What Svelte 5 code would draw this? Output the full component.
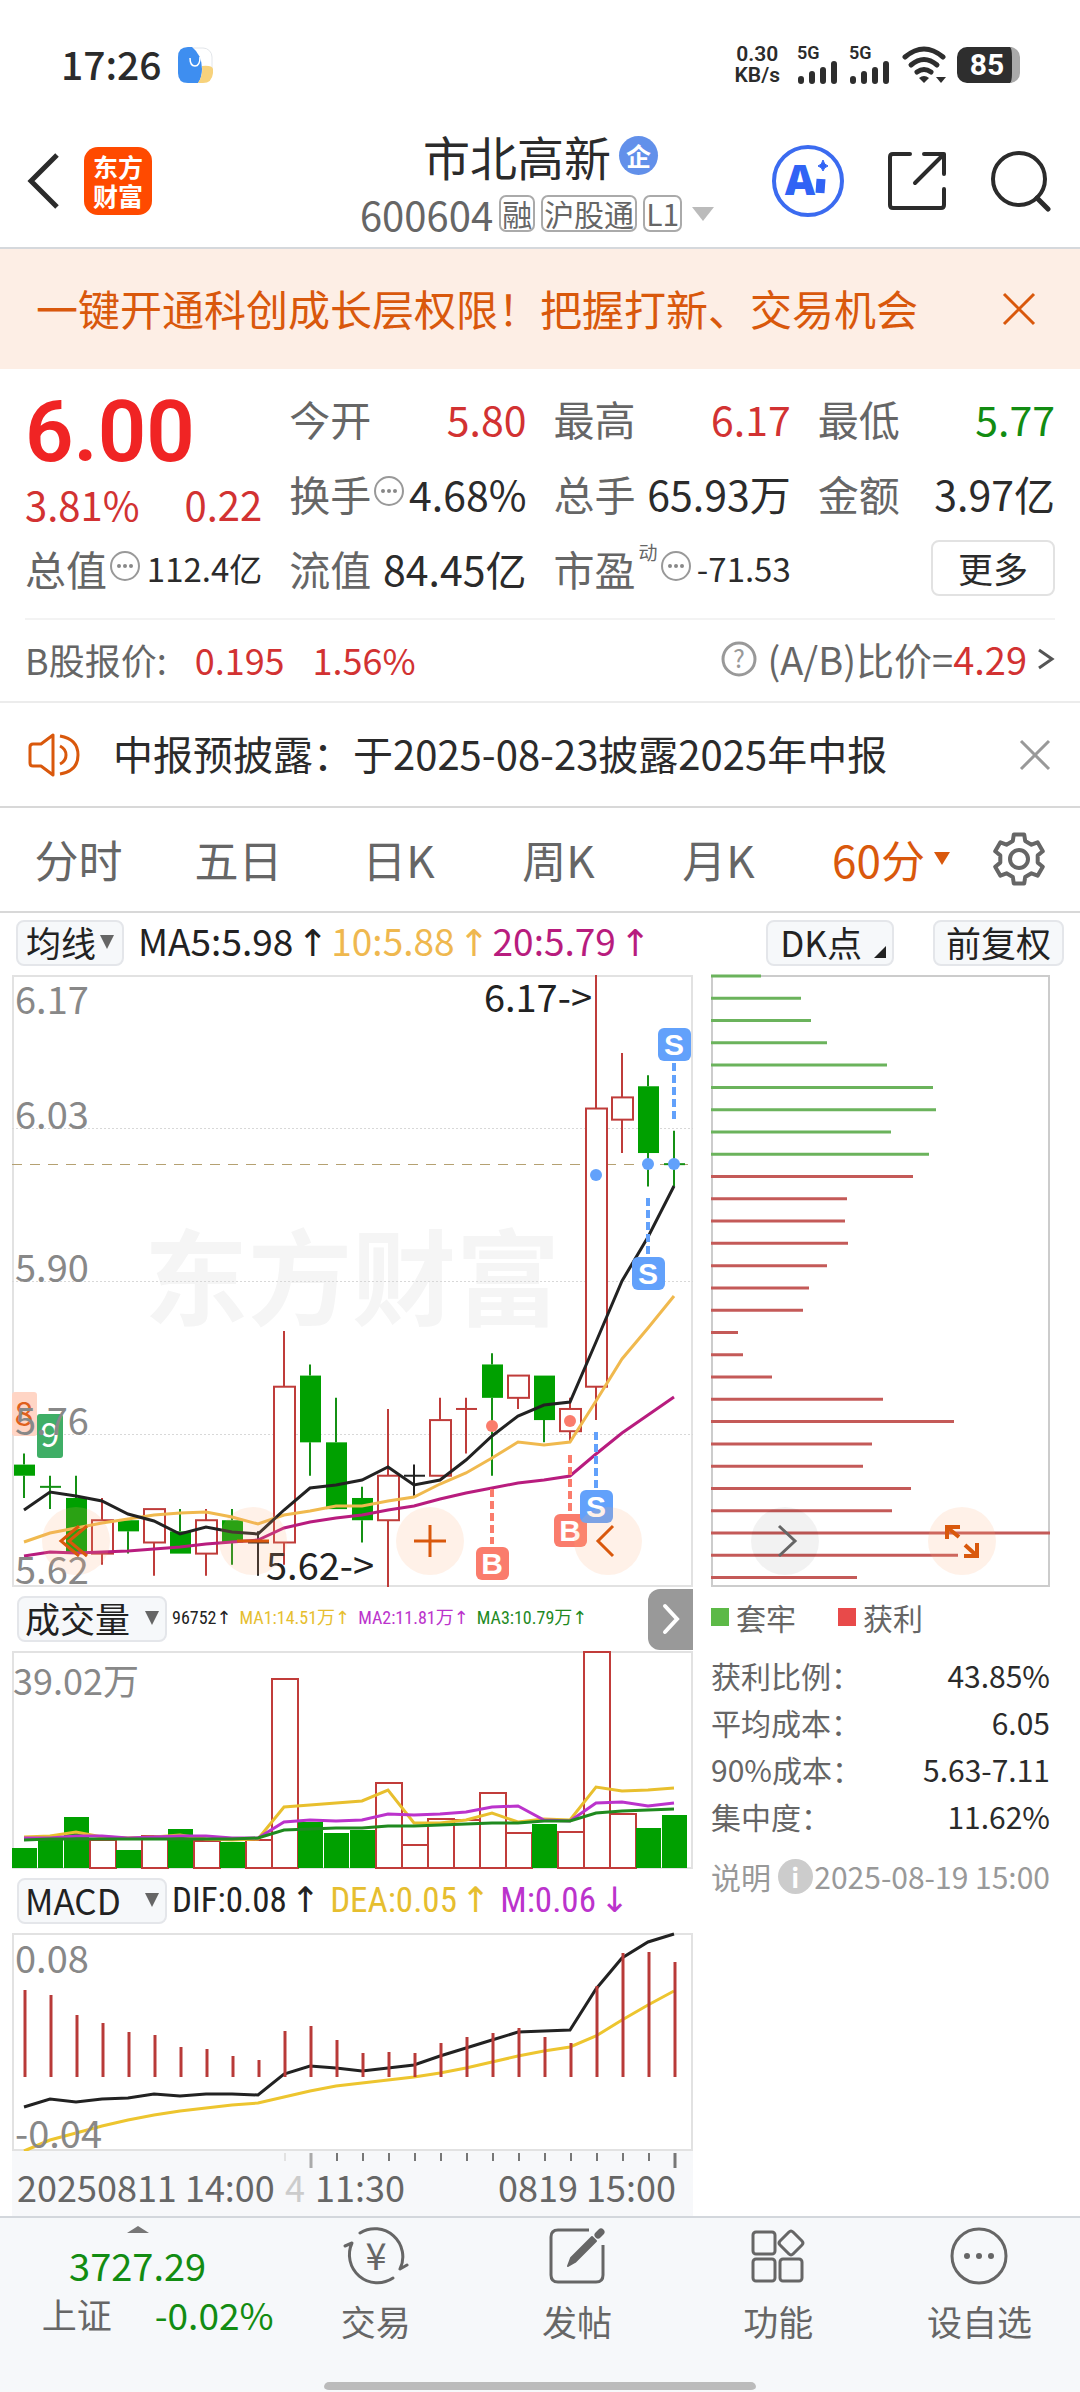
<script lang="ts">
    const STEP = 26;
    const TOP_PRICE = 6.17;
    const PX_PER_YUAN = 612 / 0.55;

    // [open, close, high, low]
    const candles = [
        [5.73, 5.72, 5.74, 5.7],
        [5.71, 5.71, 5.72, 5.69],
        [5.7, 5.65, 5.72, 5.65],
        [5.65, 5.68, 5.7, 5.64],
        [5.68, 5.67, 5.68, 5.65],
        [5.66, 5.69, 5.69, 5.63],
        [5.67, 5.65, 5.69, 5.65],
        [5.65, 5.68, 5.69, 5.63],
        [5.68, 5.66, 5.69, 5.64],
        [5.66, 5.66, 5.67, 5.63],
        [5.66, 5.8, 5.85, 5.64],
        [5.81, 5.75, 5.82, 5.72],
        [5.75, 5.69, 5.79, 5.69],
        [5.7, 5.68, 5.71, 5.66],
        [5.68, 5.72, 5.78, 5.62],
        [5.72, 5.72, 5.73, 5.7],
        [5.72, 5.77, 5.79, 5.72],
        [5.78, 5.78, 5.79, 5.74],
        [5.82, 5.79, 5.83, 5.72],
        [5.79, 5.81, 5.81, 5.78],
        [5.81, 5.77, 5.81, 5.75],
        [5.76, 5.78, 5.79, 5.75],
        [5.8, 6.05, 6.17, 5.77],
        [6.04, 6.06, 6.1, 6.01],
        [6.07, 6.01, 6.08, 5.98],
        [6.0, 6.0, 6.03, 5.98],
    ];
    // colour of the candles that open and close at one price
    const flatColors: Record<number, string> = { 1: "green", 9: "black", 15: "black", 17: "red", 25: "green" };

    const ma5 = [535, 517, 521, 526, 539, 546, 559, 552, 557, 559, 535, 513, 510, 505, 492, 510, 505, 485, 461, 441, 430, 427, 367, 306, 262, 211];
    const ma10 = [567, 558, 553, 548, 544, 540, 538, 537, 542, 549, 540, 536, 531, 531, 526, 522, 509, 498, 483, 467, 470, 467, 426, 384, 353, 321];
    const ma20 = [581, 577, 578, 577, 576, 574, 572, 569, 567, 565, 553, 547, 543, 540, 535, 531, 524, 518, 513, 508, 505, 501, 479, 458, 440, 422];

    const marks = [
        { kind: "S", i: 25, y: 53, from: 88, to: 144, dot: 189 },
        { kind: "S", i: 24, y: 282, from: 223, to: 279, dot: 189 },
        { kind: "B", i: 18, y: 572, from: 514, to: 569, dot: 451 },
        { kind: "B", i: 21, y: 539, from: 480, to: 536, dot: 446 },
        { kind: "S", i: 22, y: 515, from: 457, to: 513, dot: 200 },
    ];

    const volumes = [20, 29, 51, 28, 18, 32, 39, 27, 26, 28, 189, 46, 35, 38, 85, 23, 49, 48, 75, 35, 44, 36, 216, 54, 40, 53];
    const volRed = [3, 5, 7, 9, 10, 14, 15, 16, 17, 18, 19, 21, 22, 23];
    const volMa1 = [186, 185, 181, 186, 187, 186, 184, 188, 189, 188, 156, 154, 152, 150, 139, 172, 172, 169, 162, 171, 168, 169, 136, 140, 139, 137];
    const volMa2 = [187, 187, 185, 185, 187, 186, 185, 185, 187, 187, 171, 169, 170, 169, 163, 164, 163, 161, 156, 155, 169, 170, 152, 151, 155, 152];
    const volMa3 = [189, 188, 188, 188, 188, 188, 188, 188, 188, 187, 179, 178, 177, 177, 175, 175, 174, 173, 172, 172, 170, 170, 162, 160, 159, 158];

    const macd = [87, 82, 62, 54, 45, 42, 30, 28, 21, 17, 46, 51, 37, 24, 25, 24, 34, 40, 44, 49, 40, 34, 91, 124, 125, 115];
    const dif = [174, 166, 169, 166, 165, 161, 163, 161, 161, 162, 141, 133, 135, 138, 135, 132, 123, 115, 107, 99, 98, 97, 56, 25, 9, 1];
    const dea = [218, 207, 200, 193, 187, 182, 178, 175, 172, 170, 164, 158, 153, 150, 147, 144, 140, 135, 129, 123, 118, 114, 103, 87, 72, 58];

    const chips = [50, 90, 100, 116, 176, 222, 225, 180, 218, 202, 136, 134, 137, 116, 98, 92, 27, 32, 61, 172, 243, 161, 152, 200, 181, 339, 247, 146];
    const LOSS_ROWS = 9;

    const stats = [
        ["获利比例：", "43.85%"],
        ["平均成本：", "6.05"],
        ["90%成本：", "5.63-7.11"],
        ["集中度：", "11.62%"],
    ];

    const tabs = ["分时", "五日", "日K", "周K", "月K", "60分"];
    let activeTab = $state("60分");
    let bannerOpen = $state(true);
    let noticeOpen = $state(true);

    const cx = (i: number) => 12 + STEP * i;
    const py = (price: number) => (TOP_PRICE - price) * PX_PER_YUAN;
    const line = (ys: number[]) => ys.map((y, i) => `${cx(i)},${y}`).join(" ");

    function candleColor(i: number) {
        const [open, close] = candles[i];
        return flatColors[i] ?? (close > open ? "red" : "green");
    }

    function gearPath() {
        const pts: string[] = [];
        for (let k = 0; k < 6; k++) {
            const a = -90 + k * 60;
            for (const [d, r] of [[-19, 19], [-12, 25], [12, 25], [19, 19]]) {
                const t = ((a + d) * Math.PI) / 180;
                pts.push(`${(28 + r * Math.cos(t)).toFixed(1)} ${(28 + r * Math.sin(t)).toFixed(1)}`);
            }
        }
        return "M" + pts.join("L") + "Z";
    }
</script>

{#snippet dots()}
    <svg class="dots" viewBox="0 0 30 30" aria-hidden="true">
        <circle cx="15" cy="15" r="14" fill="none" stroke="#999" stroke-width="2" />
        <circle cx="9" cy="15" r="2" fill="#888" />
        <circle cx="15" cy="15" r="2" fill="#888" />
        <circle cx="21" cy="15" r="2" fill="#888" />
    </svg>
{/snippet}

{#snippet signal()}
    <span class="signal">
        <b>5G</b>
        <svg width="42" height="25" viewBox="0 0 42 25" stroke="#2e2e2e" stroke-width="6" stroke-linecap="round">
            <path d="M4 19V21M15 14V21M26 10V21M37 4V21" />
        </svg>
    </span>
{/snippet}

<div class="status">
    <span class="clock">17:26</span>
    <svg class="app-dot" width="35" height="36" viewBox="0 0 35 36">
        <rect x="1" y="1" width="33" height="34" rx="9" fill="#fff" stroke="#e3e6ea" />
        <path d="M10 0H14Q24 8 24 22Q24 31 20 36H10Q0 36 0 26V10Q0 0 10 0Z" fill="#3e8ef0" />
        <path d="M24 19Q34 18 35 22V26Q34 36 25 36H20Q25 29 24 19Z" fill="#f7d27c" />
        <path d="M12 11Q12 19 17 19Q22 19 22 10" fill="none" stroke="#fff" stroke-width="1.500" />
    </svg>
    <div class="status-right">
        <span class="speed"><b>0.30</b><b>KB/s</b></span>
        {@render signal()}
        {@render signal()}
        <svg width="46" height="38" viewBox="0 0 46 38" fill="none" stroke="#2e2e2e" stroke-width="5" stroke-linecap="round">
            <path d="M4 11Q23 -5 42 11" />
            <path d="M10 19Q23 8 36 19" />
            <path d="M16 26Q23 21 30 26" />
            <path d="M18 32Q23 28 28 32L23 37Z" fill="#2e2e2e" stroke="none" />
            <path d="M35 31H45L40 37Z" fill="#2e2e2e" stroke="none" />
        </svg>
        <span class="battery"><b>85</b></span>
    </div>
</div>

<header>
    <div class="side">
        <button aria-label="返回">
            <svg width="34" height="58" viewBox="0 0 34 58" fill="none" stroke="#2b2b2b" stroke-width="5">
                <path d="M31 3L5 29L31 55" />
            </svg>
        </button>
        <a class="logo" href="#home"><span>东方</span><span>财富</span></a>
    </div>
    <div class="title">
        <h1>市北高新<span class="corp">企</span></h1>
        <div class="code">
            600604
            <span class="tag">融</span>
            <span class="tag">沪股通</span>
            <span class="tag">L1</span>
            <i class="tri"></i>
        </div>
    </div>
    <div class="side right">
        <button aria-label="AI">
            <svg width="74" height="74" viewBox="0 0 74 74">
                <circle cx="37" cy="37" r="34" fill="#fff" stroke="#3b6bf0" stroke-width="4" />
                <text class="ai" x="29" y="51" text-anchor="middle">A</text>
                <path d="M50 35L49 49" stroke="#3063f5" stroke-width="9" />
                <path d="M52 16Q53 21 57 22Q53 23 52 27Q51 23 47 22Q51 21 52 16Z" fill="#3063f5" stroke="#3063f5" />
            </svg>
        </button>
        <button aria-label="分享">
            <svg width="60" height="60" viewBox="0 0 60 60" fill="none" stroke="#2b2b2b" stroke-width="4" stroke-linecap="round" stroke-linejoin="round">
                <path d="M23 3H6Q3 3 3 6V54Q3 57 6 57H54Q57 57 57 54V38" />
                <path d="M37 3H57V23M56 4L28 32" />
            </svg>
        </button>
        <button aria-label="搜索">
            <svg width="62" height="62" viewBox="0 0 62 62" fill="none" stroke="#2b2b2b" stroke-width="4" stroke-linecap="round">
                <circle cx="30" cy="29" r="26" />
                <path d="M48 48L59 59" stroke-width="5" />
            </svg>
        </button>
    </div>
</header>

{#if bannerOpen}
    <div class="banner">
        <a href="#open">一键开通科创成长层权限！把握打新、交易机会</a>
        <button aria-label="关闭" onclick={() => (bannerOpen = false)}>
            <svg width="34" height="34" viewBox="0 0 34 34" stroke="#d9580c" stroke-width="3"><path d="M2 2L32 32M32 2L2 32" /></svg>
        </button>
    </div>
{/if}

<section class="quote">
    <div class="price">
        <strong>6.00</strong>
        <div class="pair red"><span>3.81%</span><span>0.22</span></div>
    </div>
    <div class="pair"><span class="label">今开</span><span class="red">5.80</span></div>
    <div class="pair"><span class="label">最高</span><span class="red">6.17</span></div>
    <div class="pair"><span class="label">最低</span><span class="green">5.77</span></div>
    <div class="pair"><span class="label">换手{@render dots()}</span><span>4.68%</span></div>
    <div class="pair"><span class="label">总手</span><span>65.93万</span></div>
    <div class="pair"><span class="label">金额</span><span>3.97亿</span></div>
    <div class="pair"><span class="label">总值{@render dots()}</span><span class="small">112.4亿</span></div>
    <div class="pair"><span class="label">流值</span><span>84.45亿</span></div>
    <div class="pair"><span class="label">市盈<sup>动</sup>{@render dots()}</span><span class="small">-71.53</span></div>
    <button class="more">更多</button>
</section>

<div class="bshare">
    <span>B股报价:</span>
    <span class="red">0.195</span>
    <span class="red">1.56%</span>
    <a href="#ratio">
        <svg class="help" width="36" height="36" viewBox="0 0 36 36">
            <circle cx="18" cy="18" r="16" fill="none" stroke="#999" stroke-width="3" />
            <text class="question" x="18" y="27" text-anchor="middle">?</text>
        </svg>
        <span>(A/B)比价=<em>4.29</em></span>
        <svg width="18" height="24" viewBox="0 0 18 24" fill="none" stroke="#555" stroke-width="3"><path d="M2 3L15 12L2 21" /></svg>
    </a>
</div>

{#if noticeOpen}
    <div class="notice">
        <svg width="54" height="46" viewBox="0 0 54 46" fill="none" stroke="#d9580c" stroke-width="3">
            <path d="M25 3V43L13 34H5Q2 34 2 31V15Q2 12 5 12H13Z" stroke-linejoin="round" />
            <path d="M32 14Q38 17 38 23Q38 29 32 32M32 4Q50 7 50 23Q50 39 32 42" />
        </svg>
        <span>中报预披露：于2025-08-23披露2025年中报</span>
        <button aria-label="关闭" onclick={() => (noticeOpen = false)}>
            <svg width="32" height="32" viewBox="0 0 32 32" stroke="#999" stroke-width="3"><path d="M2 2L30 30M30 2L2 30" /></svg>
        </button>
    </div>
{/if}

<nav class="tabs">
    {#each tabs as tab}
        <button class:active={tab === activeTab} onclick={() => (activeTab = tab)}>{tab}</button>
    {/each}
    <button class="gear" aria-label="设置">
        <svg width="56" height="56" viewBox="0 0 56 56" fill="none" stroke="#666" stroke-width="4" stroke-linejoin="round">
            <path d={gearPath()} />
            <circle cx="28" cy="28" r="9" />
        </svg>
    </button>
</nav>

<div class="ma-row">
    <button class="chip">均线<i class="tri dark"></i></button>
    <div class="values ma">
        <span class="ink">MA5:5.98<i class="arrow">↑</i></span>
        <span class="amber">10:5.88<i class="arrow">↑</i></span>
        <span class="magenta">20:5.79<i class="arrow">↑</i></span>
    </div>
    <button class="chip dk">DK点<svg width="12" height="12" viewBox="0 0 12 12"><path d="M12 0V12H0Z" fill="#222" /></svg></button>
    <button class="chip fq">前复权</button>
</div>

<main>
    <div class="left">
        <svg class="chart" viewBox="0 0 681 612">
            <rect x="1" y="1" width="679" height="610" fill="#fff" stroke="#e2e2e2" stroke-width="2" />
            <text class="watermark" x="340" y="343" text-anchor="middle">东方财富</text>
            <g stroke="#d8d8d8" stroke-dasharray="2 2">
                <path d="M0 153.500H681M0 306.500H681M0 459.500H681" />
            </g>
            <path d="M0 189.500H676" stroke="#b5a172" stroke-dasharray="10 8" />
            <rect x="0" y="417" width="25" height="44" rx="3" fill="#ffd5c5" />
            <text x="12" y="451" font-size="34" text-anchor="middle" fill="#e0601c">8</text>
            <rect x="25" y="439" width="26" height="44" rx="3" fill="#3fae66" />
            <text x="38" y="472" font-size="34" text-anchor="middle" fill="#fff">9</text>
            {#each candles as [open, close, high, low], i}
                {@const color = candleColor(i)}
                {@const top = py(Math.max(open, close))}
                {@const bottom = py(Math.min(open, close))}
                <g class="candle {color}">
                    <path d="M{cx(i)} {py(high)}V{top}M{cx(i)} {bottom}V{py(low)}" />
                    {#if open === close}
                        <path d="M{cx(i) - 10} {top}H{cx(i) + 11}" />
                    {:else if color === "red"}
                        <rect x={cx(i) - 10} y={top} width="21" height={bottom - top} />
                    {:else}
                        <rect class="solid" x={cx(i) - 10} y={top} width="21" height={bottom - top} />
                    {/if}
                </g>
            {/each}
            <g fill="none" stroke-width="3">
                <polyline points={line(ma20)} stroke="#b81c7e" />
                <polyline points={line(ma10)} stroke="#f0b94e" />
                <polyline points={line(ma5)} stroke="#222" />
            </g>
            <g class="axis">
                <text x="3" y="39">6.17</text>
                <text x="3" y="154">6.03</text>
                <text x="3" y="307">5.90</text>
                <text x="3" y="460">5.76</text>
                <text x="3" y="609">5.62</text>
            </g>
            <text class="peak" x="580" y="37" text-anchor="end">6.17-&gt;</text>
            <text class="peak" x="254" y="605">5.62-&gt;</text>
            {#each marks as mark}
                <g class="mark {mark.kind}">
                    <path d="M{cx(mark.i)} {mark.from}V{mark.to}" />
                    <circle cx={cx(mark.i)} cy={mark.dot} r="6" />
                    <rect x={cx(mark.i) - 16} y={mark.y} width="33" height="33" rx="6" />
                    <text x={cx(mark.i)} y={mark.y + 27} text-anchor="middle">{mark.kind}</text>
                </g>
            {/each}
        </svg>

        <div class="sub-row">
            <button class="chip wide">成交量<i class="tri dark"></i></button>
            <div class="values tight">
                <span class="ink">96752<i class="arrow">↑</i></span>
                <span class="gold">MA1:14.51万<i class="arrow">↑</i></span>
                <span class="purple">MA2:11.81万<i class="arrow">↑</i></span>
                <span class="leaf">MA3:10.79万<i class="arrow">↑</i></span>
            </div>
            <button class="fold" aria-label="展开">
                <svg width="18" height="32" viewBox="0 0 18 32" fill="none" stroke="#fff" stroke-width="4" stroke-linecap="round"><path d="M3 3L15 16L3 29" /></svg>
            </button>
        </div>

        <svg class="chart" viewBox="0 0 681 218">
            <rect x="1" y="1" width="679" height="216" fill="#fff" stroke="#e2e2e2" stroke-width="2" />
            {#each volumes as v, i}
                {#if volRed.includes(i)}
                    <rect x={cx(i) - 12} y={217 - v} width="26" height={v} fill="#fff" stroke="#c13c3a" stroke-width="2" />
                {:else}
                    <rect x={cx(i) - 12} y={217 - v} width="25" height={v} fill="#00a000" />
                {/if}
            {/each}
            <g fill="none" stroke-width="3">
                <polyline points={line(volMa1)} stroke="#e8bf2e" />
                <polyline points={line(volMa2)} stroke="#bb33cc" />
                <polyline points={line(volMa3)} stroke="#1f8a1f" />
            </g>
            <text class="axis volume" x="1" y="44">39.02万</text>
        </svg>

        <div class="sub-row">
            <button class="chip wide">MACD<i class="tri dark"></i></button>
            <div class="values">
                <span class="ink">DIF:0.08<i class="arrow">↑</i></span>
                <span class="gold">DEA:0.05<i class="arrow">↑</i></span>
                <span class="purple">M:0.06<i class="arrow">↓</i></span>
            </div>
        </div>

        <svg class="chart" viewBox="0 0 681 218">
            <rect x="1" y="1" width="679" height="216" fill="#fff" stroke="#e2e2e2" stroke-width="2" />
            <polyline points={line(dif)} fill="none" stroke="#222" stroke-width="3" />
            <polyline points={line(dea)} fill="none" stroke="#edc52f" stroke-width="3" />
            {#each macd as m, i}
                <path d="M{cx(i) + 1} {144 - m}V144" stroke="#b83a38" stroke-width="3" />
            {/each}
            <text class="axis" x="3" y="40">0.08</text>
            <text class="axis" x="3" y="215">-0.04</text>
        </svg>

        <svg class="chart" viewBox="0 0 681 65">
            <rect width="681" height="65" fill="#f7f8fa" />
            {#each candles as _, i}
                {#if i > 9}
                    <path
                        d="M{cx(i) + 1} 2V{i === 11 || i === 25 ? 17 : 10}"
                        stroke={i === 10 ? "#e2e2e2" : i === 11 ? "#aaa" : "#777"}
                        stroke-width={i === 11 || i === 25 ? 3 : 2}
                    />
                {/if}
            {/each}
            <g class="time">
                <text x="5" y="51">20250811 14:00</text>
                <text x="273" y="51" fill="#ccc">4</text>
                <text x="303" y="51">11:30</text>
                <text x="664" y="51" text-anchor="end">0819 15:00</text>
            </g>
        </svg>
    </div>

    <aside>
        <svg class="chart" viewBox="0 0 339 612">
            <rect x="1" y="1" width="337" height="610" fill="#fff" stroke="#ccc" stroke-width="2" />
            {#each chips as w, i}
                <path d="M0 {1 + i * 22.28}H{w}" stroke={i < LOSS_ROWS ? "#6bb35c" : "#c45a58"} stroke-width="3" />
            {/each}
        </svg>
        <div class="legend">
            <span><i class="box loss"></i>套牢</span>
            <span><i class="box gain"></i>获利</span>
        </div>
        <dl>
            {#each stats as [name, value]}
                <div><dt>{name}</dt><dd>{value}</dd></div>
            {/each}
        </dl>
        <div class="note">
            <span>说明</span>
            <i class="info">i</i>
            <time>2025-08-19 15:00</time>
        </div>
    </aside>

    <div class="tools">
        <button aria-label="更早"><svg viewBox="0 0 68 68"><path d="M37 19L19 34L37 49M45 19L27 34L45 49" /></svg></button>
        <button aria-label="缩小"><svg viewBox="0 0 68 68"><path d="M18 34H50" /></svg></button>
        <button aria-label="放大"><svg viewBox="0 0 68 68"><path d="M18 34H50M34 18V50" /></svg></button>
        <button aria-label="后退"><svg viewBox="0 0 68 68"><path d="M39 19L24 34L39 49" /></svg></button>
        <button class="grey" aria-label="前进"><svg viewBox="0 0 68 68"><path d="M28 19L44 34L28 49" /></svg></button>
        <button aria-label="全屏"><svg viewBox="0 0 68 68"><path class="bold" d="M19 32V20H32M20 21L31 30M49 36V49H36M48 48L37 38" /></svg></button>
    </div>
</main>

<footer>
    <div class="bar">
        <a class="index" href="#index">
            <i class="up"></i>
            <span class="point">3727.29</span>
            <span class="change"><span>上证</span><span class="green">-0.02%</span></span>
        </a>
        <a class="item" href="#trade">
            <svg width="66" height="60" viewBox="0 0 66 60">
                <g fill="none" stroke="#666" stroke-width="3" stroke-linecap="round" stroke-linejoin="round">
                    <path d="M17 7A28 28 0 0 1 57 43L64 39" />
                    <path d="M50 52A28 28 0 0 1 9 17L2 20" />
                </g>
                <text class="yuan" x="33" y="44" text-anchor="middle">¥</text>
            </svg>
            <span>交易</span>
        </a>
        <a class="item" href="#post">
            <svg width="60" height="60" viewBox="0 0 60 60" fill="none" stroke="#666" stroke-width="3">
                <path d="M42 4H11Q4 4 4 11V49Q4 56 11 56H49Q56 56 56 49V19" />
                <path d="M21 40L24 32L45 11L49 15L28 36Z" fill="#666" stroke-width="2" stroke-linejoin="round" />
                <path d="M51 9L54 6" stroke-width="7" stroke-linecap="round" />
            </svg>
            <span>发帖</span>
        </a>
        <a class="item" href="#more">
            <svg width="60" height="60" viewBox="0 0 60 60" fill="none" stroke="#666" stroke-width="3">
                <rect x="5" y="6" width="22" height="22" rx="3" />
                <rect x="5" y="33" width="22" height="22" rx="3" />
                <rect x="32" y="33" width="22" height="22" rx="3" />
                <path d="M41 6Q43 4 45 6L54 15Q56 17 54 19L45 28Q43 30 41 28L32 19Q30 17 32 15Z" />
            </svg>
            <span>功能</span>
        </a>
        <a class="item" href="#watch">
            <svg width="60" height="60" viewBox="0 0 60 60">
                <circle cx="30" cy="30" r="27" fill="none" stroke="#666" stroke-width="3" />
                <circle cx="18" cy="30" r="3" fill="#666" />
                <circle cx="30" cy="30" r="3" fill="#666" />
                <circle cx="42" cy="30" r="3" fill="#666" />
            </svg>
            <span>设自选</span>
        </a>
    </div>
    <div class="home"></div>
</footer>

<style>
    :global(body) {
        background: #fff;
        color: #2b2b2b;
        font-family: "Noto Sans CJK SC", "Noto Sans", sans-serif;
    }

    button {
        padding: 0;
        border: none;
        background: none;
        color: inherit;
        font: inherit;
    }

    a {
        color: inherit;
        text-decoration: none;
    }

    svg {
        display: block;
        flex: none;
    }

    i,
    em {
        font-style: normal;
    }

    .red,
    em {
        color: #d23232;
    }

    .green {
        color: #128c12;
    }

    .ink {
        color: #222;
    }

    .amber {
        color: #efb84f;
    }

    .magenta {
        color: #b81c7e;
    }

    .gold {
        color: #e6be2f;
    }

    .purple {
        color: #bb33cc;
    }

    .leaf {
        color: #1f8a1f;
    }

    .status {
        display: flex;
        align-items: center;
        gap: 16px;
        height: 130px;
        padding: 0 60px 0 61px;
    }

    .clock {
        padding-bottom: 4px;
        font-size: 39px;
        font-weight: 500;
    }

    .status-right {
        display: flex;
        align-items: center;
        gap: 10px;
        margin-left: auto;
    }

    .speed {
        display: flex;
        flex-direction: column;
        align-items: center;
        margin-right: 7px;
        font-family: Roboto, sans-serif;
        font-size: 21px;
        line-height: 21px;
    }

    .speed b,
    .signal b {
        font-weight: 600;
    }

    .signal {
        display: flex;
        flex-direction: column;
        font-family: Roboto, sans-serif;
        font-size: 18px;
        line-height: 14px;
    }

    .battery {
        display: flex;
        justify-content: center;
        width: 50px;
        padding-left: 5px;
        border-right: 8px solid #aaa;
        border-radius: 10px;
        background: #2e2e2e;
        color: #fff;
        font-family: Roboto, sans-serif;
        font-size: 30px;
        line-height: 36px;
    }

    header {
        display: flex;
        align-items: center;
        justify-content: space-between;
        height: 117px;
        padding: 0 29px 0 26px;
        border-bottom: 2px solid #d5d8dc;
    }

    .side {
        display: flex;
        flex: 1;
        align-items: center;
        gap: 24px;
        padding-bottom: 15px;
    }

    .side.right {
        justify-content: flex-end;
        gap: 42px;
    }

    .logo {
        display: flex;
        flex-direction: column;
        align-items: center;
        justify-content: center;
        width: 68px;
        height: 68px;
        border-radius: 14px;
        background: #ff4a00;
        color: #fff;
        font-size: 25px;
        font-weight: 700;
        line-height: 29px;
    }

    .ai {
        fill: #3063f5;
        font-family: "Open Sans", sans-serif;
        font-size: 42px;
        font-weight: 800;
    }

    .title {
        display: flex;
        flex-direction: column;
        align-items: center;
        padding-left: 4px;
    }

    h1 {
        display: flex;
        align-items: center;
        gap: 8px;
        margin: 0;
        font-size: 47px;
        font-weight: 400;
        line-height: 56px;
    }

    .corp {
        width: 39px;
        border-radius: 50%;
        background: #6290ea;
        color: #fff;
        font-size: 25px;
        font-weight: 700;
        line-height: 39px;
        text-align: center;
    }

    .code {
        display: flex;
        align-items: center;
        gap: 6px;
        padding: 0 7px 6px 0;
        color: #666;
        font-size: 40px;
        line-height: 60px;
    }

    .tag {
        padding: 0 1px;
        border: 2px solid #aaa;
        border-radius: 7px;
        font-size: 30px;
        line-height: 33px;
    }

    .tri {
        margin-left: 4px;
        border: 11px solid transparent;
        border-top: 14px solid #bbb;
        border-bottom: none;
    }

    .tri.dark {
        margin: 0;
        border-width: 14px 7px 0;
        border-top-color: #666;
    }

    .banner {
        display: flex;
        align-items: center;
        justify-content: space-between;
        height: 120px;
        padding: 0 44px 0 36px;
        background: #fdeee5;
        color: #d9580c;
        font-size: 42px;
    }

    .banner a {
        padding-bottom: 4px;
    }

    .quote {
        display: grid;
        grid-template-columns: repeat(4, 1fr);
        grid-auto-rows: 75px;
        column-gap: 27px;
        margin: 0 25px;
        padding: 11px 0 13px;
        border-bottom: 2px solid #f3f3f3;
    }

    .price {
        display: flex;
        flex-direction: column;
        grid-row: span 2;
    }

    .price strong {
        color: #f02424;
        font-family: Roboto, sans-serif;
        font-size: 85px;
        font-weight: 600;
        line-height: 104px;
    }

    .price .pair {
        font-size: 40px;
        line-height: 40px;
    }

    .pair {
        display: flex;
        align-items: center;
        justify-content: space-between;
        font-size: 41px;
        line-height: 50px;
        white-space: nowrap;
    }

    .label {
        display: flex;
        align-items: center;
        gap: 3px;
        color: #666;
        font-size: 41px;
    }

    .label sup {
        align-self: flex-start;
        font-size: 19px;
        line-height: 18px;
    }

    .dots {
        width: 30px;
        height: 30px;
        padding-bottom: 4px;
    }

    .small {
        font-size: 33px;
    }

    .more {
        align-self: center;
        justify-self: end;
        width: 124px;
        height: 56px;
        border: 2px solid #e2e2e2;
        border-radius: 8px;
        font-size: 35px;
        line-height: 48px;
    }

    .bshare {
        display: flex;
        align-items: center;
        gap: 28px;
        height: 77px;
        padding: 0 25px 4px;
        border-bottom: 2px solid #ececec;
        color: #666;
        font-size: 36px;
    }

    .bshare a {
        display: flex;
        align-items: center;
        gap: 10px;
        margin-left: auto;
        font-size: 38px;
    }

    .help {
        overflow: visible;
    }

    .question {
        fill: #999;
        font-size: 25px;
    }

    .notice {
        display: flex;
        align-items: center;
        gap: 31px;
        height: 103px;
        padding: 0 29px 0 28px;
        border-bottom: 2px solid #d8d8d8;
        font-size: 40px;
    }

    .notice span {
        padding-bottom: 4px;
    }

    .notice button {
        margin-left: auto;
    }

    .tabs {
        display: grid;
        grid-template-columns: repeat(6, 4fr) 3fr;
        height: 103px;
        border-bottom: 2px solid #d8d8d8;
        color: #666;
        font-size: 44px;
    }

    .tabs button {
        padding: 0 3px 2px 0;
    }

    .tabs .active {
        position: relative;
        color: #d9580c;
    }

    .tabs .active::after {
        position: absolute;
        top: 44px;
        right: 10px;
        border: 8px solid transparent;
        border-top: 13px solid #d9580c;
        border-bottom: none;
        content: "";
    }

    .tabs .gear {
        justify-self: center;
    }

    .ma-row {
        display: flex;
        align-items: center;
        height: 60px;
        padding: 0 16px 2px;
    }

    .values {
        display: flex;
        gap: 10px;
        margin-left: 5px;
        padding-bottom: 2px;
        font-family: "Roboto Condensed", "Liberation Sans Narrow", "Noto Sans CJK SC", sans-serif;
        font-size: 35px;
        line-height: 44px;
        white-space: nowrap;
    }

    .values.ma {
        gap: 3px;
        margin-left: 14px;
        font-family: "Noto Sans CJK SC", sans-serif;
        font-size: 37px;
    }

    .values.tight {
        gap: 8px;
        font-size: 18px;
    }

    .arrow {
        margin-left: 4px;
        font-family: "DejaVu Sans", sans-serif;
    }

    .tight .arrow {
        margin-left: 0;
    }

    .chip {
        display: flex;
        align-items: center;
        gap: 4px;
        height: 46px;
        padding: 0 8px 2px;
        border: 2px solid #e4e6ea;
        border-radius: 8px;
        background: #f6f8fa;
        color: #222;
        font-size: 35px;
        line-height: 40px;
        white-space: nowrap;
    }

    .chip.dk {
        gap: 12px;
        margin: 0 39px 0 auto;
        padding: 0 6px 2px 12px;
    }

    .chip.fq {
        padding: 0 11px 2px;
    }

    .chip.dk svg {
        align-self: flex-end;
        margin-bottom: 4px;
    }

    .chip.wide {
        justify-content: space-between;
        width: 150px;
        padding: 0 6px 2px;
    }

    main {
        position: relative;
        display: grid;
        grid-template-columns: minmax(0, 681fr) minmax(0, 339fr);
        gap: 18px;
        padding: 0 30px 0 12px;
    }

    .chart {
        width: 100%;
        overflow: visible;
    }

    .watermark {
        fill: #f5f5f5;
        font-size: 104px;
        font-weight: 700;
    }

    .axis {
        fill: #888;
        font-size: 38px;
    }

    .axis.volume {
        font-size: 36px;
    }

    .peak {
        fill: #222;
        font-size: 38px;
    }

    .time {
        fill: #666;
        font-size: 36px;
    }

    .candle {
        fill: none;
        stroke-width: 2;
    }

    .candle.red {
        stroke: #bf3c3a;
    }

    .candle.red rect {
        fill: #fff;
    }

    .candle.green {
        stroke: #149014;
    }

    .candle.black {
        stroke: #222;
    }

    .candle .solid {
        fill: #00a000;
        stroke: none;
    }

    .mark path {
        stroke-dasharray: 8 4;
        stroke-width: 4;
    }

    .mark text {
        fill: #fff;
        font-family: "Liberation Sans", sans-serif;
        font-size: 30px;
        font-weight: 700;
    }

    .mark.S {
        fill: #62a1fb;
    }

    .mark.S path {
        stroke: #62a1fb;
    }

    .mark.B {
        fill: #fa7c6c;
    }

    .mark.B path {
        stroke: #fa7c6c;
    }

    .sub-row {
        display: flex;
        align-items: center;
        height: 64px;
        padding-left: 5px;
    }

    .fold {
        display: flex;
        align-items: center;
        justify-content: center;
        width: 45px;
        height: 61px;
        margin-left: auto;
        border-radius: 12px 0 0 12px;
        background: #999;
    }

    aside {
        color: #666;
        font-size: 30px;
        white-space: nowrap;
    }

    .legend {
        display: flex;
        gap: 42px;
        height: 60px;
    }

    .legend span {
        display: flex;
        align-items: center;
        gap: 7px;
    }

    .box {
        width: 18px;
        height: 18px;
    }

    .loss {
        background: #5cb947;
    }

    .gain {
        background: #e84a4a;
    }

    dl {
        margin: 5px 0 13px;
    }

    dl div {
        display: flex;
        justify-content: space-between;
        line-height: 47px;
    }

    dd {
        margin: 0;
        color: #2b2b2b;
    }

    .note {
        display: flex;
        align-items: center;
        justify-content: space-between;
        color: #999;
        line-height: 47px;
    }

    .info {
        width: 35px;
        margin-left: 5px;
        border-radius: 50%;
        background: #ccc;
        color: #fff;
        font-size: 26px;
        font-weight: 700;
        line-height: 35px;
        text-align: center;
    }

    .tools {
        position: absolute;
        top: 532px;
        right: 84px;
        left: 42px;
        display: flex;
        justify-content: space-between;
    }

    .tools button {
        width: 68px;
        height: 68px;
        border-radius: 50%;
        background: rgba(255, 170, 120, 0.17);
    }

    .tools path {
        fill: none;
        stroke: #d9580c;
        stroke-width: 3;
    }

    .tools .bold {
        stroke-width: 4;
    }

    .tools .grey {
        background: rgba(0, 0, 0, 0.05);
    }

    .tools .grey path {
        stroke: #666;
    }

    footer {
        border-top: 2px solid #d3d7dc;
        background: #f6f8fa;
        color: #666;
        font-size: 35px;
    }

    .bar {
        display: grid;
        grid-template-columns: 275fr repeat(4, 201fr);
        height: 164px;
    }

    .index,
    .item {
        display: flex;
        flex-direction: column;
        align-items: center;
    }

    .index {
        padding-top: 8px;
    }

    .up {
        border: 11px solid transparent;
        border-top: none;
        border-bottom: 7px solid #777;
    }

    .point {
        margin-top: 6px;
        color: #128c12;
        font-size: 38px;
        line-height: 52px;
    }

    .change {
        display: flex;
        gap: 43px;
        padding-left: 40px;
        line-height: 46px;
    }

    .change .green {
        font-size: 37px;
    }

    .yuan {
        fill: #666;
        font-size: 38px;
    }

    .item {
        gap: 12px;
        padding-top: 8px;
    }

    .item span {
        line-height: 46px;
    }

    .home {
        width: 40%;
        height: 8px;
        margin: 0 auto;
        border-bottom: 2px solid #f6f8fa;
        border-radius: 5px;
        background: #bbb;
    }
</style>
